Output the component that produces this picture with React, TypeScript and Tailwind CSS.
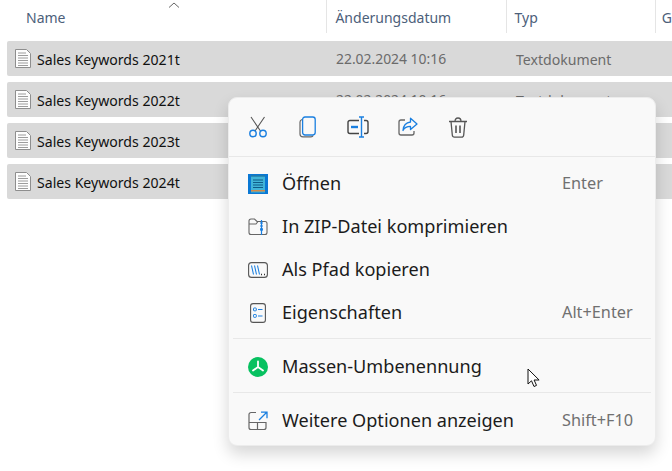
import React from "react";

const FileIcon = () => (
  <svg width="16" height="19" viewBox="0 0 16 19" className="shrink-0">
    <path d="M.5.5h11l4 4v14H.5z" fill="#fdfdfd" stroke="#8e8e8e" />
    <path d="M3 4h8M3 6.500h10M3 9h10M3 11.500h10M3 14h10M3 16.500h10" stroke="#9c9c9c" strokeWidth="1" />
  </svg>
);

const Row = ({ name, details = true }: { name: string; details?: boolean }) => (
  <div className="h-[35px] ml-[7px] bg-[#d9d9d9] rounded-l-[2px] flex items-center text-[14.100px] shrink-0">
    <div className="w-[321px] pl-2 flex items-center gap-[6px] text-[#111]">
      <FileIcon />
      <span className="pt-[2px]">{name}</span>
    </div>
    {details && <div className="w-[180px] pl-[8px] pt-[2px] text-[13.900px] text-[#6b6b6b]">22.02.2024 10:16</div>}
    {details && <div className="pl-[8px] pt-[2px] text-[#6b6b6b]">Textdokument</div>}
  </div>
);

const Head = ({ label, w, cls }: { label: string; w: string; cls?: string }) => (
  <div className={`${w} h-[33px] pt-[2px] border-r border-[#e5e5e5] flex items-center text-[14px] text-[#4c607a] ${cls ?? "pl-2"}`}>{label}</div>
);

const Scissors = () => (
  <svg width="20" height="22" viewBox="0 0 20 22" fill="none">
    <path d="M3 1l9.500 14M16.500 1L7 15" stroke="#555" strokeWidth="1.100" />
    <circle cx="5" cy="17.500" r="3.200" stroke="#1a7fe0" strokeWidth="1.400" />
    <circle cx="15" cy="17.500" r="3.200" stroke="#1a7fe0" strokeWidth="1.400" />
  </svg>
);
const Copy = () => (
  <svg width="18" height="22" viewBox="0 0 18 22" fill="none">
    <path d="M3 3.500C1.600 4 1 5 1 6v12c0 1.700 1.200 2.800 3 2.800h8c1 0 1.800-.5 2.200-1.300" stroke="#666" strokeWidth="1.200" />
    <rect x="3.600" y="1" width="12.600" height="18" rx="2.400" fill="#f9f9f9" stroke="#1a7fe0" strokeWidth="1.300" />
  </svg>
);
const Rename = () => (
  <svg width="22" height="22" viewBox="0 0 22 22" fill="none">
    <path d="M12 4.500H3a2 2 0 0 0-2 2v9a2 2 0 0 0 2 2h9M17 4.500h2a2 2 0 0 1 2 2v9a2 2 0 0 1-2 2h-2" stroke="#444" strokeWidth="1.400" />
    <path d="M4 11h7" stroke="#1a7fe0" strokeWidth="2.400" />
    <path d="M12 1h5M14.500 1v20M12 21h5" stroke="#1a7fe0" strokeWidth="1.400" />
  </svg>
);
const Share = () => (
  <svg width="20" height="20" viewBox="0 0 20 20" fill="none">
    <path d="M7 3H3a2 2 0 0 0-2 2v11a2 2 0 0 0 2 2h11a2 2 0 0 0 2-2v-2" stroke="#666" strokeWidth="1.300" />
    <path d="M12.500 1.200L19 7l-6.500 5.600V9.400C9 9.400 6.500 10.600 5 13.500c.4-5 3.400-8 7.500-8.500z" stroke="#1a7fe0" strokeWidth="1.300" strokeLinejoin="round" />
  </svg>
);
const Trash = () => (
  <svg width="20" height="21" viewBox="0 0 20 21" fill="none" stroke="#555" strokeWidth="1.300">
    <path d="M1 4.500h18M7 4.500c0-2 1-3.500 3-3.500s3 1.500 3 3.500" />
    <path d="M3 4.500l1.300 13.500c.1 1.300 1 2.200 2.200 2.200h7c1.200 0 2.100-.9 2.200-2.200L17 4.500" />
    <path d="M8 8.500v7.500M12 8.500v7.500" strokeWidth="1.600" />
  </svg>
);

const Notepad = () => (
  <svg width="20" height="20" viewBox="0 0 20 20">
    <rect width="20" height="20" fill="#0a78d4" />
    <rect x="3" y="1.500" width="14" height="17" fill="#41b4d8" />
    <rect x="3" y="16" width="14" height="1.500" fill="#d08a4a" />
    <path d="M5 6h10M5 8.500h10M5 11h10M5 13.500h10" stroke="#0f5c88" strokeWidth="1.200" />
    <path d="M4 1v2M6 1v2M8 1v2M10 1v2M12 1v2M14 1v2M16 1v2" stroke="#0a4f80" strokeWidth=".8" />
  </svg>
);
const Zip = () => (
  <svg width="20" height="18" viewBox="0 0 20 18" fill="none">
    <path d="M1 14.500V3a2 2 0 0 1 2-2h3.500l2.500 2.500h8a2 2 0 0 1 2 2v9a2 2 0 0 1-2 2H3a2 2 0 0 1-2-2zM1 6h7l2-2.500" stroke="#666" strokeWidth="1.100" />
    <path d="M13.500 2v15M12 5h3M12 8h3M12 11h3" stroke="#1a7fe0" strokeWidth="1.200" />
    <circle cx="13.500" cy="11.500" r="1.500" fill="#1a7fe0" />
  </svg>
);
const PathIcon = () => (
  <svg width="20" height="16" viewBox="0 0 20 16" fill="none">
    <rect x=".6" y=".6" width="18.800" height="14.800" rx="3" stroke="#555" strokeWidth="1.100" />
    <path d="M3.500 3.500l2 9M6.500 3.500l2 9M9.500 3.500l2 9" stroke="#1a7fe0" strokeWidth="1.100" />
    <path d="M13 12.500h1M16 12.500h1" stroke="#333" strokeWidth="1.300" />
  </svg>
);
const Props = () => (
  <svg width="16" height="20" viewBox="0 0 16 20" fill="none">
    <rect x=".6" y=".6" width="14.800" height="18.800" rx="2.500" stroke="#555" strokeWidth="1.100" />
    <rect x="3.500" y="5" width="2.800" height="2.800" rx=".6" stroke="#1a7fe0" strokeWidth="1" />
    <rect x="3.500" y="11.500" width="2.800" height="2.800" rx=".6" stroke="#1a7fe0" strokeWidth="1" />
    <path d="M8 6.500h4.500M8 13h4.500" stroke="#1a7fe0" strokeWidth="1.200" />
  </svg>
);
const Mass = () => (
  <svg width="20" height="20" viewBox="0 0 20 20">
    <circle cx="10" cy="10" r="10" fill="#07c160" />
    <path d="M10 4.500v5.500M10 10l-5 3.500M10 10l5 3.500" stroke="#fff" strokeWidth="1.800" strokeLinecap="round" />
  </svg>
);
const More = () => (
  <svg width="20" height="20" viewBox="0 0 20 20" fill="none">
    <path d="M8 1.500H3A2 2 0 0 0 1 3.500v13a2 2 0 0 0 2 2h13a2 2 0 0 0 2-2v-5H9.500v7M1 11.500h8.500" stroke="#666" strokeWidth="1.200" />
    <path d="M11 9l7.500-7.500M13 1.200h6v6" stroke="#1a7fe0" strokeWidth="1.300" />
  </svg>
);

const Item = ({ icon, label, hint }: { icon: React.ReactNode; label: string; hint?: string }) => (
  <div className="h-[43px] flex items-center">
    <div className="w-[53px] flex justify-center pl-[5px] shrink-0">{icon}</div>
    <span className="text-[18.100px] text-[#1c1c1c] flex-1 whitespace-nowrap">{label}</span>
    {hint && <span className="w-[93px] text-[16.300px] text-[#707070] whitespace-nowrap">{hint}</span>}
  </div>
);

export default function App() {
  return (
    <div className="relative w-[672px] h-[471px] bg-white overflow-hidden font-['Noto_Sans',sans-serif]">
      <div className="flex h-[41px] items-start">
        <Head label="Name" w="w-[329px]" cls="pl-[26px]" />
        <Head label="Änderungsdatum" w="w-[180px]" />
        <Head label="Typ" w="w-[150px]" />
        <div className="h-[33px] pt-[2px] flex items-center pl-[6px] text-[14px] text-[#4c607a]">G</div>
      </div>
      <svg width="12" height="6" viewBox="0 0 12 6" className="absolute left-[168px] top-[2px]" fill="none">
        <path d="M1 5.500L6 1l5 4.500" stroke="#666" strokeWidth="1" />
      </svg>
      <div className="flex flex-col gap-[6px]">
        <Row name="Sales Keywords 2021t" />
        <Row name="Sales Keywords 2022t" />
        <Row name="Sales Keywords 2023t" details={false} />
        <Row name="Sales Keywords 2024t" details={false} />
      </div>

      <div className="absolute left-[228px] top-[97px] w-[428px] h-[349px] bg-[#f9f9f9] rounded-[9px] border border-[#ececec] shadow-[0_8px_16px_rgba(0,0,0,0.16)]">
        <div className="h-[59px] border-b border-[#e8e8e8] flex items-center pl-[4px]">
          <div className="w-[50px] flex justify-center"><Scissors /></div>
          <div className="w-[50px] flex justify-center"><Copy /></div>
          <div className="w-[50px] flex justify-center"><Rename /></div>
          <div className="w-[50px] flex justify-center"><Share /></div>
          <div className="w-[50px] flex justify-center"><Trash /></div>
        </div>
        <div className="pt-[5px]">
          <Item icon={<Notepad />} label="Öffnen" hint="Enter" />
          <Item icon={<Zip />} label="In ZIP-Datei komprimieren" />
          <Item icon={<PathIcon />} label="Als Pfad kopieren" />
          <Item icon={<Props />} label="Eigenschaften" hint="Alt+Enter" />
        </div>
        <div className="h-px bg-[#e8e8e8] mx-[4px] mt-[4px] mb-[6px]" />
        <Item icon={<Mass />} label="Massen-Umbenennung" />
        <div className="h-px bg-[#e8e8e8] mx-[4px] mt-[4px] mb-[6px]" />
        <Item icon={<More />} label="Weitere Optionen anzeigen" hint="Shift+F10" />
      </div>

      <svg width="14" height="20" viewBox="0 0 14 20" className="absolute left-[527px] top-[368px]">
        <path d="M1 1v15l3.500-3.200L7 18.500l2.500-1.100-2.400-5.400h5z" fill="#fff" stroke="#111" strokeWidth="1" strokeLinejoin="round" />
      </svg>
    </div>
  );
}
